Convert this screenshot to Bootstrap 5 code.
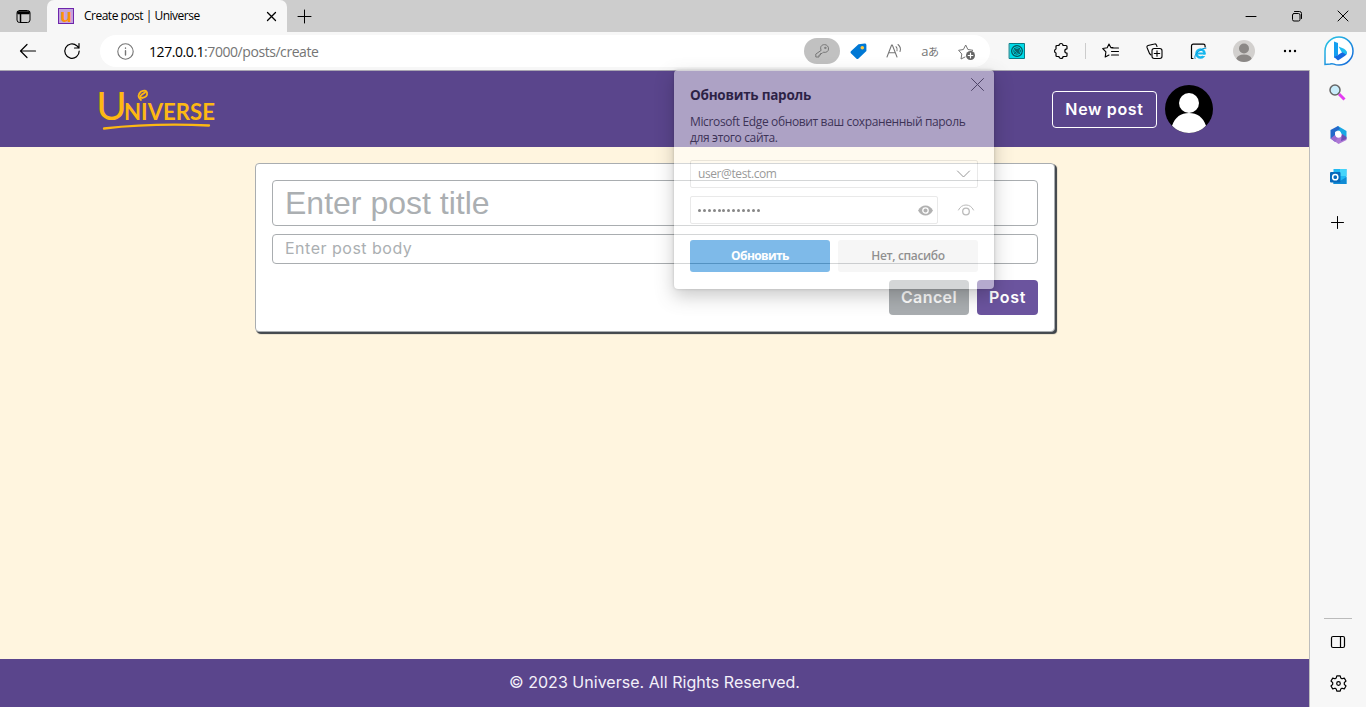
<!DOCTYPE html>
<html lang="en">
<head>
<meta charset="utf-8">
<meta name="viewport" content="width=device-width, initial-scale=1">
<title>Create post | Universe</title>
<link href="https://cdn.jsdelivr.net/npm/bootstrap@5.3.0/dist/css/bootstrap.min.css" rel="stylesheet">
<style>
:root{--violet:#5a458c;--cream:#fff5df;--chrome:#f7f7f7;--ui:"Open Sans","Noto Sans",sans-serif;--brand:Inter,"Open Sans",sans-serif}
body{height:707px;overflow:hidden;background:var(--chrome);font-family:var(--ui);color:#000}
svg{display:block;flex:none;overflow:visible}
.ln{fill:none;stroke:currentColor;stroke-linecap:round;stroke-linejoin:round}
.tabstrip{height:32px;background:#cdcdcd}
.tabbtn{width:47px}
.tab{width:240px;background:var(--chrome);border-radius:7px 7px 0 0;padding:0 11px;font-size:12px;letter-spacing:-.5px}
.tab-name{margin-left:10px}
.winbtn{width:46px}
.toolbar{height:38px;padding-left:20px}
.reload{margin-left:28px}
.address{width:890px;height:32px;margin-left:20px;padding:0 6px 0 17px;background:#fff;border-radius:16px;font-size:14px;letter-spacing:-.44px;color:#757575}
.url{margin-left:15px}
.key{width:36px;height:26px;border-radius:13px;background:#c1c1c1;color:#777}
.slot{width:36px;height:32px}
.translate{font:13px "Open Sans","Noto Sans CJK JP",sans-serif;letter-spacing:-.3px}
.translate b{font-weight:400;font-size:11px}
.tools{margin-left:5px}
.ext{width:44px}
.ext.wide{width:48px}
.vr-line{width:1px;height:16px;margin:0 0 0 2px;background:#ccc}
.bing{margin-left:10px}
.page{background:var(--cream);border-top:1px solid #a9a6b2}
.side{width:57px;border-left:1px solid #bdbdbd;background:var(--chrome)}
.site-head{height:76px;background:var(--violet);padding:0 96px 0 98px}
.btn-new{width:105px;height:37px;border:1px solid #fff;border-radius:4px;color:#fff;font:600 16px/1 var(--brand);letter-spacing:.66px;padding:0 0 1px}
.editor{width:800px;height:169px;margin:16px 0 0 255px;padding:16px;background:#fff;border:1px solid #a9adb0;border-radius:4px;box-shadow:1px 1px 0 #444950,2px 2px 1px #343a40}
.field{border:1px solid #a9adb0;border-radius:4px;padding:0 12px;color:#212529;background:#fff;width:100%;display:block}
.field::placeholder{color:#abafb2;opacity:1}
.f-title{height:46px;font:32px "Liberation Sans",sans-serif}
.f-body{height:30px;font:16px var(--brand);letter-spacing:.5px;padding:0 12px 2px}
.act{height:35px;border:0;border-radius:4px;color:#fff;font:600 16px/1 var(--brand);padding:0 0 1px}
.act.cancel{width:80px;background:#a9adb0;letter-spacing:.4px}
.act.send{width:61px;background:#6b549e;letter-spacing:.7px}
.site-foot{height:48px;background:var(--violet);color:#f4f1fa;font:16px var(--brand);letter-spacing:.03px;padding-bottom:2px}
.pw{left:674px;top:70px;width:320px;height:219px;background:#fff;opacity:.5;border-radius:4px;padding:16px;box-shadow:0 7px 18px rgba(0,0,0,.42),0 0 3px rgba(0,0,0,.4);font-size:12px;line-height:16px}
.pw h2{font-size:13.500px;line-height:18px;font-weight:700;margin:0 0 10px;letter-spacing:-.25px}
.pw-close{right:10px;top:8px;color:#444}
.pw p{height:32px;margin:0 0 14px;color:#222;letter-spacing:-.36px;white-space:nowrap}
.pw-in{height:28px;border:1px solid #d4d4d4;border-radius:2px;padding:0 7px;color:#333;letter-spacing:-.4px}
.pw-in.short{width:248px}
.pw-btn{height:32px;border-radius:3px;background:#0078d4;color:#fff;font-weight:700;letter-spacing:-.6px}
.pw-btn.no{background:#eee;color:#222;font-weight:600;letter-spacing:-.35px}
.pw-dots{gap:1.900px}
.dot{width:3px;height:3px;border-radius:50%;background:#111}
.eye{margin-right:-3px}
.peek{margin-left:20px;color:#777}
.side-sep{width:28px;height:1px;background:#bbb;margin-bottom:17px}
.s1{margin-top:14px}.s2{margin-top:26px}.s3{margin-top:24px}.s4{margin-top:31px}.s5{margin:27px 0 15px}
</style>
</head>
<body class="d-flex flex-column">
<div class="tabstrip d-flex flex-shrink-0">
  <div class="tabbtn d-flex align-items-center justify-content-center">
    <svg width="15" height="15" viewBox="0 0 15 15" class="ln"><rect x="1" y="1.500" width="13" height="12" rx="2.500"/><path d="M1.500 3h12M2 4.500h11M4.500 5v8" stroke-width="1.500"/></svg>
  </div>
  <div class="tab d-flex align-items-center">
    <svg width="16" height="16" viewBox="0 0 16 16"><rect x=".5" y=".5" width="15" height="15" fill="#c3a3dc" stroke="#6e25ac"/><text x="8" y="13.500" text-anchor="middle" font-family="Liberation Sans" font-size="19" font-weight="700" letter-spacing="0" fill="#ff9108">u</text></svg>
    <span class="tab-name me-auto">Create post | Universe</span>
    <svg width="9" height="9" viewBox="0 0 9 9" class="ln" stroke-width="1.300"><path d="M.5.5l8 8m0-8l-8 8"/></svg>
  </div>
  <div class="d-flex align-items-center ps-2 ms-1 me-auto"><svg width="13" height="13" viewBox="0 0 13 13" class="ln"><path d="M5.500 0v13M-1 6.500h13"/></svg></div>
  <div class="winbtn d-flex align-items-center justify-content-center"><svg width="10" height="10" class="ln"><path d="M0 5.500h10"/></svg></div>
  <div class="winbtn d-flex align-items-center justify-content-center"><svg width="10" height="10" class="ln" stroke-width="1"><rect x=".5" y="2.500" width="7.500" height="7.500" rx="1.500"/><path d="M2.500.5h5a2 2 0 012 2v5"/></svg></div>
  <div class="winbtn d-flex align-items-center justify-content-center"><svg width="10" height="10" class="ln"><path d="M0 0l10 10m0-10L0 10"/></svg></div>
</div>

<div class="toolbar d-flex align-items-center flex-shrink-0">
  <svg width="16" height="14" viewBox="0 0 16 14" class="ln" stroke-width="1.200"><path d="M15.500 7H.5m6.500-6.500L.5 7 7 13.500"/></svg>
  <svg width="16" height="16" viewBox="0 0 16 16" class="ln reload" stroke-width="1.200"><path d="M15.200 8A7.200 7.200 0 1 1 12.800 2.700L15 5M15 .5V5h-4.500"/></svg>
  <div class="address d-flex align-items-center">
    <svg width="17" height="17" viewBox="0 0 17 17" class="ln" stroke-width="1.100"><circle cx="8.500" cy="8.500" r="7.700"/><path d="M8.500 7.800v4.200M8.500 5v.3" stroke-width="1.400"/></svg>
    <span class="url me-auto"><span class="text-black">127.0.0.1</span>:7000/posts/create</span>
    <div class="key d-flex align-items-center justify-content-center"><svg width="14" height="14" viewBox="0 0 14 14" class="ln"><path d="M6 6C4.500 2.500 7 .6 9.500.6A4 4 0 0113.500 5c0 2.500-2.500 4-5.200 3.200L7 9.500H5.500V11H4v2H.8v-2.500z"/><circle cx="10.200" cy="3.900" r=".7"/></svg></div>
    <div class="slot d-flex align-items-center justify-content-center"><svg width="17" height="17" viewBox="0 0 17 17"><path d="M8.500 1.200L14.800.6Q16.400.6 16.400 2v6L8.500 15.500Q7.500 16.500 6.300 15.500L.9 10.300q-.9-1.100 0-2z" fill="#0078d4"/><circle cx="12.300" cy="4.700" r="1.800" fill="#ffc83d"/></svg></div>
    <div class="slot d-flex align-items-center justify-content-center"><svg width="16" height="16" viewBox="0 0 16 16" class="ln"><path d="M1 14L5.600 2h.7L11 14M2.700 9.800h6.500M10 3.700q1.800 1.800 1 4M12 1.500q3.500 3 2 7" stroke-width="1.050"/></svg></div>
    <div class="slot translate d-flex align-items-center justify-content-center"><span>a</span><b>あ</b></div>
    <div class="slot d-flex align-items-center justify-content-center"><svg width="17" height="17" viewBox="0 0 17 17" class="ln"><path d="M7 14l-4 2 .8-5L.6 7.300l4.800-.8L7.700 2l2.200 4.500 5.100.8-1.500 1.200"/><circle cx="12.500" cy="12.500" r="4.500" fill="#666" stroke="none"/><path d="M10.200 12.500h4.600m-2.300-2.300v4.600" stroke="#fff" stroke-width="1.200"/></svg></div>
  </div>
  <div class="tools d-flex align-items-center">
    <div class="ext d-flex justify-content-center"><svg width="16" height="16" viewBox="0 0 16 16" class="ln"><rect x=".5" y=".5" width="15" height="15" fill="#00dbe8" stroke="#087c86"/><g stroke="#075b64" stroke-width=".9"><circle cx="8" cy="8" r="5.300" stroke-dasharray="1.500 .7" stroke-width="1.300"/><circle cx="8" cy="8" r="3.300"/><path d="M6 8l2-2 2 2-2 2zM5 5l6 6M11 5l-6 6"/></g></svg></div>
    <div class="ext d-flex justify-content-center"><svg width="16" height="16" viewBox="0 0 16 16" class="ln" stroke-width="1.200"><path d="M6 2.500a2 2 0 014 0h3q1 0 1 1v2.300a2.200 2.200 0 000 4.400v2.300q0 1-1 1h-3a2 2 0 01-4 0H4q-1 0-1-1V10a2.100 2.100 0 010-4V3.500q0-1 1-1z"/></svg></div>
    <div class="vr-line"></div>
    <div class="ext wide d-flex justify-content-center"><svg width="17" height="16" viewBox="0 0 17 16" class="ln" stroke-width="1.100"><path d="M11 4.600H8.800L7 1 5.200 4.800.7 5.500l3.200 3.400L3.200 14 7 12M10 5h6.500M9.500 8.500h7M9.500 12h7"/></svg></div>
    <div class="ext d-flex justify-content-center"><svg width="17" height="17" viewBox="2 0 17 17" class="ln" stroke-width="1.100"><path d="M5 12L3.500 10.500 1 4.500Q.5 3 2 2.500L8.500 1q1.500-.4 2 1.200L11 3.500"/><rect x="6" y="5.500" width="10" height="10" rx="2.200"/><path d="M8.300 10.500h5.400M11 7.800v5.400"/></svg></div>
    <div class="ext d-flex justify-content-center"><svg width="17" height="17" viewBox="2 0 17 17" class="ln"><path d="M3 15.500H1.500V3q0-1.800 1.800-1.800h10q1.800 0 1.800 1.800v1" stroke-width="1.200"/><circle cx="10.500" cy="10.500" r="4" stroke="#16b7ee" stroke-width="2.500"/><path d="M7 10.500h7.500" stroke="#16b7ee" stroke-width="2"/><path d="M5 15.500q-1.300-3 3.500-7T16 5" stroke="#0098dc"/><path d="M12.500 12.400h4" stroke="#f7f7f7" stroke-width="1.300" stroke-linecap="butt"/></svg></div>
    <div class="ext wide d-flex justify-content-center"><svg width="22" height="22" viewBox="2 0 22 22"><circle cx="11" cy="11" r="11" fill="#d2d0ce"/><circle cx="11" cy="8.500" r="5" fill="#8b8886"/><path d="M3.300 18.700Q4.500 14.700 11 14.500q6.500.2 7.700 4.200Q15.500 22 11 22t-7.700-3.300" fill="#8b8886"/></svg></div>
    <div class="ext d-flex justify-content-center"><svg width="14" height="4" viewBox="2 0 14 4"><circle cx="2" cy="2" r="1.200"/><circle cx="7" cy="2" r="1.200"/><circle cx="12" cy="2" r="1.200"/></svg></div>
    <svg width="30" height="30" viewBox="0 0 30 30" class="bing"><defs><linearGradient id="bg" x1="0" y1="0" x2="1" y2="1"><stop stop-color="#29c9e5"/><stop offset="1" stop-color="#1666d9"/></linearGradient></defs><path d="M1 28.500V15A14 14 0 1115 29q-3 0-5-.9-2-.8-3.800-.1z" fill="#fff" stroke="url(#bg)" stroke-width="1.500"/><path d="M10 5.500l4 1.500v12l-4 3z" fill="#159ff0"/><path d="M10 21l4-2 4.500-3 4-.500q1 3-2.500 5L14 24.500z" fill="#1769e0"/><path d="M14.500 10.500l5.500 2.300q3.800 2 2.500 6l-5-3z" fill="#20bdf0"/></svg>
  </div>
</div>

<div class="d-flex flex-grow-1 overflow-hidden">
  <div class="page d-flex flex-column flex-grow-1">
    <header class="site-head d-flex align-items-center">
      <svg class="me-auto" width="118" height="44" viewBox="0 0 118 44" aria-label="Universe">
        <g fill="#fdb813" font-family="Lato"><text x="-2" y="33" font-size="39" textLength="31" lengthAdjust="spacingAndGlyphs">U</text><text x="26" y="33" font-size="23" font-weight="700" textLength="91" lengthAdjust="spacingAndGlyphs">NIVERSE</text></g>
        <g fill="none" stroke="#fdb813" stroke-width="1.800" stroke-linecap="round"><path d="M43 13q-5-4 0-8.500 5-2 6 1 1 4.500-5 5.500-3-1 0-3.500l3-2"/><path d="M6 41.500Q55 36 111 38.500" stroke-width="2.300"/></g>
      </svg>
      <button class="btn-new btn bg-transparent">New post</button>
      <svg width="48" height="48" viewBox="0 0 48 48" class="ms-2"><circle cx="24" cy="24" r="24"/><circle cx="24" cy="18" r="10" fill="#fff"/><path d="M7 40.800C10 32 16 28 24 28s14 4 17 12.800Q34 48 24 48T7 40.800" fill="#fff"/></svg>
    </header>
    <main class="flex-grow-1">
      <form class="editor">
        <input class="field f-title mb-2" placeholder="Enter post title" aria-label="Post title">
        <input class="field f-body mb-3" placeholder="Enter post body" aria-label="Post body">
        <div class="d-flex justify-content-end gap-2"><button type="button" class="act cancel">Cancel</button><button type="button" class="act send">Post</button></div>
      </form>
    </main>
    <footer class="site-foot d-flex align-items-center justify-content-center"><span>© 2023 Universe. All Rights Reserved.</span></footer>
  </div>
  <aside class="side d-flex flex-column align-items-center flex-shrink-0">
    <svg width="16" height="16" viewBox="1 0 16 16" class="s1"><path d="M10 10l5.500 5.500" stroke="#e33bf1" stroke-width="3"/><circle cx="6" cy="6" r="5" fill="#c9edfb" stroke="#666" stroke-width="1.500"/></svg>
    <svg width="17" height="18" viewBox="0 0 17 18" class="s2"><path d="M8 0l8.500 5v7L12 9.500 10 5 5 4z" fill="#17a8e5"/><path d="M8 0L.5 4v8.500L6 16l2-3-3-2V6l5-3z" fill="#2368ca"/><path d="M3 14l5.500-3.500L12 8l4.500 4v2L8.500 18z" fill="#ad78d5"/><path d="M.5 12.500L5 9l3 3-3 4z" fill="#9a6bd0"/><path d="M12 8l4.500 3v2L11 15z" fill="#6a50b5"/><circle cx="8.500" cy="8.800" r="3" fill="#fff"/></svg>
    <svg width="17" height="17" viewBox="0 0 17 17" class="s3"><path d="M3.500 1h13v15h-13z" fill="#20b8f2"/><path d="M10 1h6.500v7H10z" fill="#45d4fa"/><path d="M3.500 9l6.500 4 6.500-4v7h-13z" fill="#108bd4"/><rect x="0" y="4" width="10.500" height="10.500" rx="1" fill="#0669bb"/><circle cx="5.250" cy="9.200" r="2.600" fill="none" stroke="#fff" stroke-width="1.500"/></svg>
    <svg width="13" height="13" viewBox="1 0 13 13" class="ln s4"><path d="M6.500.5v12M.5 6.500h12"/></svg>
    <div class="side-sep mt-auto"></div>
    <svg width="14" height="12" viewBox="0 0 14 12" class="ln" stroke-width="1.200"><rect x=".5" y=".5" width="13" height="11" rx="1.500"/><path d="M9.500.5v11"/></svg>
    <svg width="17" height="17" viewBox="0 0 17 17" class="ln s5" stroke-width="1.200"><path d="M6.800.8h3.400l.6 2.300 1.200.7 2.300-.7L16 6l-1.700 1.700v1.600L16 11l-1.700 2.900-2.300-.7-1.200.7-.6 2.300H6.800l-.6-2.300-1.200-.7-2.300.7L1 11l1.700-1.700V7.700L1 6l1.700-2.900 2.300.7 1.200-.7z"/><circle cx="8.500" cy="8.500" r="1.800"/></svg>
  </aside>
</div>

<section class="pw position-absolute" role="dialog">
  <svg class="pw-close position-absolute ln" width="13" height="13" viewBox="0 0 13 13"><path d="M.5.500l12 12m0-12l-12 12"/></svg>
  <h2>Обновить пароль</h2>
  <p>Microsoft Edge обновит ваш сохраненный пароль<br>для этого сайта.</p>
  <div class="pw-in d-flex align-items-center justify-content-between mb-2"><span>user@test.com</span><svg width="13" height="8" viewBox="0 0 13 8" class="ln"><path d="M.5 1l6 6 6-6"/></svg></div>
  <div class="d-flex align-items-center mb-3">
    <div class="pw-in short d-flex align-items-center"><div class="pw-dots d-flex me-auto"><i class="dot"></i><i class="dot"></i><i class="dot"></i><i class="dot"></i><i class="dot"></i><i class="dot"></i><i class="dot"></i><i class="dot"></i><i class="dot"></i><i class="dot"></i><i class="dot"></i><i class="dot"></i><i class="dot"></i></div>
      <svg width="15" height="11" viewBox="0 0 15 11" class="eye"><path d="M0 5.500Q3 .5 7.500.5T15 5.500Q12 10.500 7.500 10.500T0 5.500" fill="#666"/><circle cx="7.500" cy="5.500" r="2.700" fill="#666" stroke="#fff" stroke-width="1.300"/></svg></div>
    <svg width="16" height="12" viewBox="0 0 16 12" class="ln peek"><path d="M.5 6Q3 1 8 1t7.500 5"/><circle cx="8" cy="7.500" r="3.300" stroke-width="1.300"/></svg>
  </div>
  <div class="d-flex gap-2"><div class="pw-btn d-flex align-items-center justify-content-center w-50">Обновить</div><div class="pw-btn no d-flex align-items-center justify-content-center w-50">Нет, спасибо</div></div>
</section>
<script src="https://cdn.jsdelivr.net/npm/bootstrap@5.3.0/dist/js/bootstrap.bundle.min.js"></script>
</body>
</html>
